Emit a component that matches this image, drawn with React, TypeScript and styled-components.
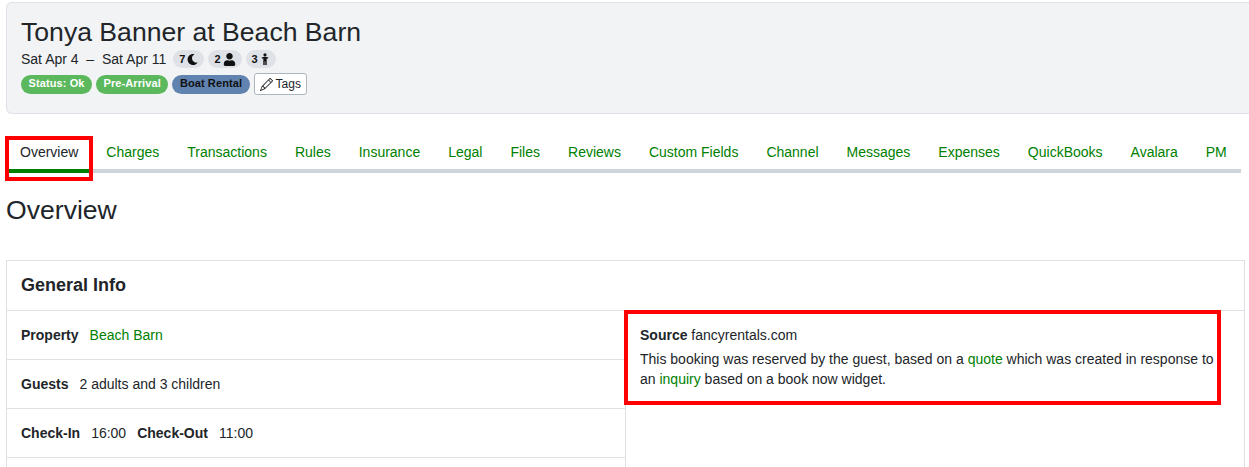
import { FC } from "react";
import styled, { createGlobalStyle } from "styled-components";
import { FaMoon, FaUser } from "react-icons/fa";
import { BsPencil } from "react-icons/bs";

const GlobalStyle = createGlobalStyle`
  html, body {
    margin: 0;
    height: 467px;
    overflow: hidden;
    background: #fff;
  }
  body {
    font-family: "Liberation Sans", Arial, sans-serif;
    font-size: 14px;
    color: #212529;
  }
`;

const Page = styled.div`
  box-sizing: border-box;
  height: 467px;
  overflow: hidden;
  padding: 2px 4px 0 6px;
`;

const Header = styled.header`
  height: 112px;
  margin-right: -4px;
  box-sizing: border-box;
  padding: 13px 14px 0;
  background: #f2f3f5;
  border: 1px solid #dee2e6;
  border-right: 0;
  border-radius: 6px 0 0 6px;
`;

const Title = styled.h1`
  margin: 0;
  font-size: 26.6px;
  line-height: 32px;
  font-weight: 400;
`;

const DateRow = styled.div`
  display: flex;
  align-items: center;
  height: 20px;
  margin-top: 1px;
  line-height: 20px;
`;

const Dates = styled.span`
  margin-right: 7px;
`;

const CountPill = styled.span`
  display: inline-flex;
  align-items: center;
  justify-content: center;
  gap: 2px;
  height: 18px;
  padding: 0 6px;
  margin-right: 4px;
  border-radius: 9px;
  background: #dee2e6;
  font-size: 11px;
  font-weight: 700;
  color: #111;
`;

const TagRow = styled.div`
  display: flex;
  align-items: center;
  gap: 4px;
  margin-top: 4px;
`;

const Badge = styled.span<{ $bg: string; $fg: string }>`
  height: 19px;
  line-height: 17px;
  padding: 0 7.5px;
  border-radius: 10px;
  background: ${({ $bg }) => $bg};
  color: ${({ $fg }) => $fg};
  font-size: 11px;
  font-weight: 700;
  letter-spacing: 0.1px;
`;

const TagButton = styled.button`
  display: inline-flex;
  align-items: center;
  gap: 3px;
  height: 22px;
  padding: 0 5px;
  border: 1px solid #adb5bd;
  border-radius: 3px;
  background: #fff;
  color: #212529;
  font-family: inherit;
  font-size: 12px;
`;

const Tabs = styled.nav`
  display: flex;
  height: 38px;
  margin-top: 17px;
  margin-right: 4px;
  border-bottom: 4px solid #ced4da;
`;

const Tab = styled.a<{ $active?: boolean }>`
  position: relative;
  height: 38px;
  padding: 0 14px;
  line-height: 42px;
  white-space: nowrap;
  color: ${({ $active }) => ($active ? "#212529" : "green")};
  ${({ $active }) => $active && "border-bottom: 4px solid green;"}
`;

const RedBox = styled.span`
  position: absolute;
  pointer-events: none;
  border: 4px solid #f00;
`;

const TabMark = styled(RedBox)`
  left: -1px;
  top: 5px;
  width: 80px;
  height: 37px;
`;

const PageTitle = styled.h2`
  margin: 18px 0 0;
  font-size: 26.6px;
  line-height: 38px;
  font-weight: 400;
`;

const Card = styled.section`
  margin-top: 31px;
  border: 1px solid #dee2e6;
`;

const CardTitle = styled.h3`
  margin: 0;
  height: 49px;
  padding: 0 14px;
  font-size: 18px;
  line-height: 48px;
  font-weight: 700;
  border-bottom: 1px solid #dee2e6;
`;

const Columns = styled.div`
  display: grid;
  grid-template-columns: 619px 1fr;
`;

const LeftCol = styled.div`
  border-right: 1px solid #dee2e6;
`;

const Row = styled.div`
  display: flex;
  gap: 11px;
  height: 48px;
  padding: 0 14px;
  line-height: 48px;
  border-bottom: 1px solid #dee2e6;
`;

const RightCol = styled.div`
  position: relative;
  padding: 14px 14px 0;
  line-height: 20px;
`;

const SourceLine = styled.div`
  margin-bottom: 4px;
`;

const SourceMark = styled(RedBox)`
  left: -2px;
  top: -1px;
  width: 589px;
  height: 87px;
`;

const Link = styled.a`
  color: green;
`;

const tabs = [
  "Overview",
  "Charges",
  "Transactions",
  "Rules",
  "Insurance",
  "Legal",
  "Files",
  "Reviews",
  "Custom Fields",
  "Channel",
  "Messages",
  "Expenses",
  "QuickBooks",
  "Avalara",
  "PM",
];

const ChildIcon: FC = () => (
  <svg width="10" height="12" viewBox="-1 0 10 12" fill="currentColor">
    <circle cx="4" cy="1.8" r="1.6" />
    <path d="M0.6 4.6Q4 3 7.4 4.6L6.9 5.8 5.7 5.3V12H4.3V8.2H3.7V12H2.3V5.3L1.1 5.8Z" />
  </svg>
);

const App: FC = () => (
  <>
    <GlobalStyle />
    <Page>
      <Header>
        <Title>Tonya Banner at Beach Barn</Title>
        <DateRow>
          <Dates>Sat Apr 4 &nbsp;–&nbsp; Sat Apr 11</Dates>
          <CountPill>
            7<FaMoon size={11} />
          </CountPill>
          <CountPill>
            2<FaUser size={13} />
          </CountPill>
          <CountPill>
            3<ChildIcon />
          </CountPill>
        </DateRow>
        <TagRow>
          <Badge $bg="#5cb85c" $fg="#fff">Status: Ok</Badge>
          <Badge $bg="#5cb85c" $fg="#fff">Pre-Arrival</Badge>
          <Badge $bg="#6083b0" $fg="#111">Boat Rental</Badge>
          <TagButton>
            <BsPencil size={13} /> Tags
          </TagButton>
        </TagRow>
      </Header>
      <Tabs>
        {tabs.map((t, i) => (
          <Tab key={t} $active={i === 0}>
            {t}
            {i === 0 && <TabMark />}
          </Tab>
        ))}
      </Tabs>
      <PageTitle>Overview</PageTitle>
      <Card>
        <CardTitle>General Info</CardTitle>
        <Columns>
          <LeftCol>
            <Row>
              <b>Property</b>
              <Link>Beach Barn</Link>
            </Row>
            <Row>
              <b>Guests</b>
              <span>2 adults and 3 children</span>
            </Row>
            <Row>
              <b>Check-In</b>
              <span>16:00</span>
              <b>Check-Out</b>
              <span>11:00</span>
            </Row>
            <Row />
          </LeftCol>
          <RightCol>
            <SourceMark />
            <SourceLine>
              <b>Source</b> fancyrentals.com
            </SourceLine>
            <div>
              This booking was reserved by the guest, based on a <Link>quote</Link> which was
              created in response to an <Link>inquiry</Link> based on a book now widget.
            </div>
          </RightCol>
        </Columns>
      </Card>
    </Page>
  </>
);

export default App;
